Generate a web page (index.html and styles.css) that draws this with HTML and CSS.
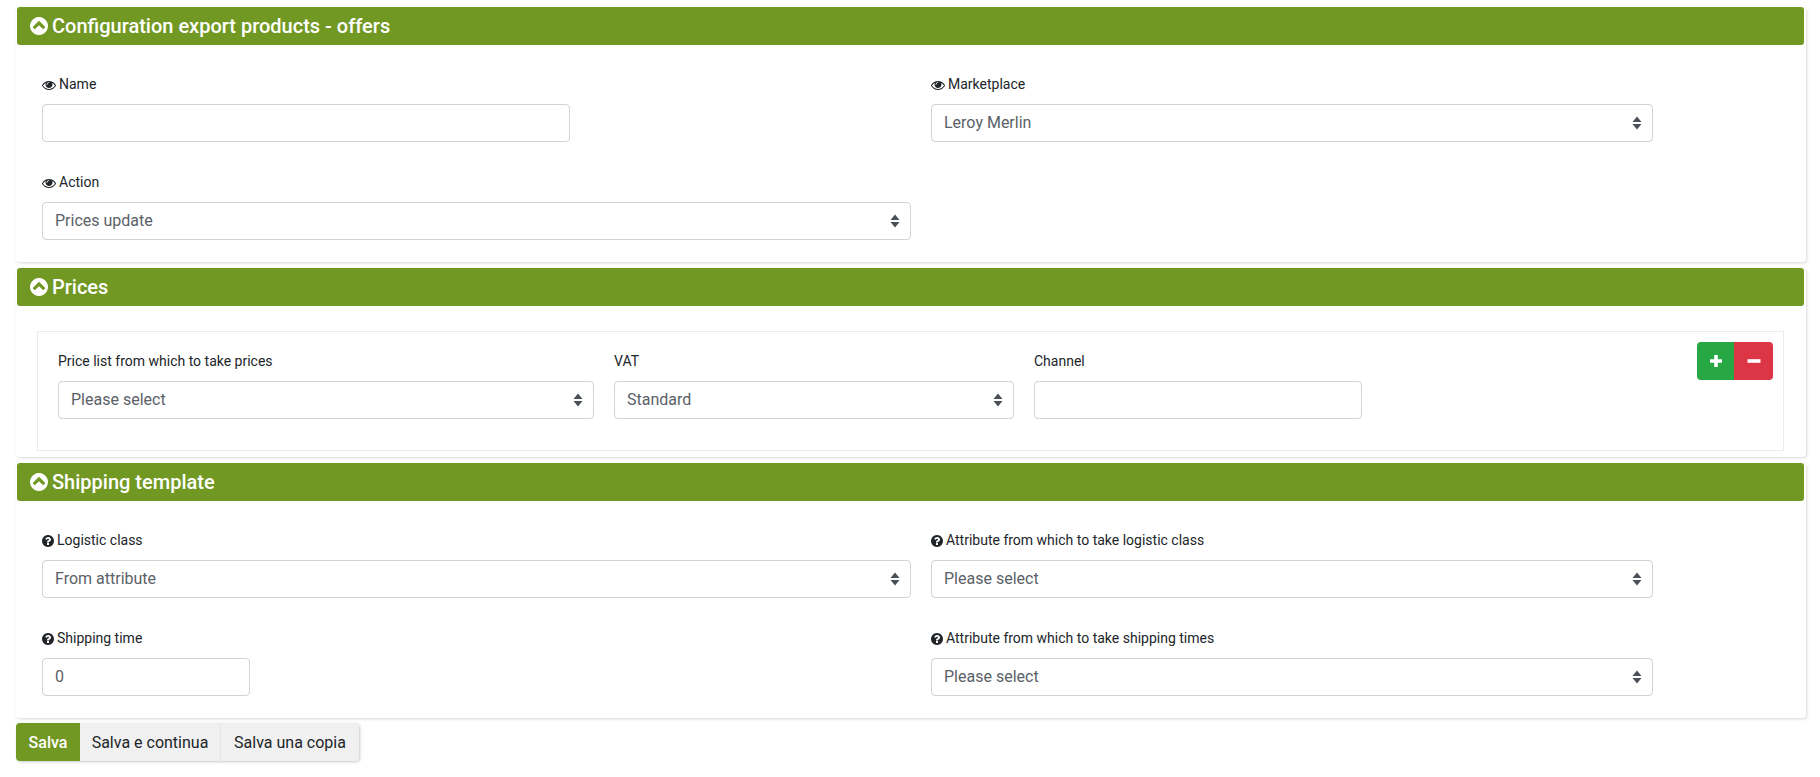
FILE: index.html
```html
<!DOCTYPE html>
<html lang="en">
<head>
<meta charset="utf-8">
<title>Configuration export products - offers</title>
<link rel="stylesheet" href="styles.css">
</head>
<body>
<svg class="defs" width="0" height="0" aria-hidden="true">
  <symbol id="i-up" viewBox="128 128 1536 1536"><path d="M1293 1139l102-102q19-19 19-45t-19-45l-454-454q-19-19-45-19t-45 19l-454 454q-19 19-19 45t19 45l102 102q19 19 45 19t45-19l307-307 307 307q19 19 45 19t45-19zm371-243q0 209-103 385.500t-279.500 279.500-385.500 103-385.500-103-279.500-279.500-103-385.500 103-385.500 279.500-279.500 385.500-103 385.500 103 279.500 279.500 103 385.500z"/></symbol>
  <symbol id="i-eye" viewBox="0 256 1792 1280"><path d="M1664 960q-152-236-381-353 61 104 61 225 0 185-131.500 316.500t-316.500 131.500-316.500-131.500-131.500-316.500q0-121 61-225-229 117-381 353 133 205 333.500 326.500t434.500 121.500 434.500-121.500 333.500-326.500zm-720-384q0-20-14-34t-34-14q-125 0-214.500 89.500t-89.500 214.500q0 20 14 34t34 14 34-14 14-34q0-86 61-147t147-61q20 0 34-14t14-34zm848 384q0 34-20 69-140 230-376.500 368.500t-499.500 138.500-499.500-139-376.500-368q-20-35-20-69t20-69q140-229 376.500-368t499.500-139 499.500 139 376.500 368q20 35 20 69z"/></symbol>
  <symbol id="i-q" viewBox="128 128 1536 1536"><path d="M1024 1376v-192q0-14-9-23t-23-9h-192q-14 0-23 9t-9 23v192q0 14 9 23t23 9h192q14 0 23-9t9-23zm256-672q0-88-55.500-163t-138.500-116-170-41q-243 0-371 213-15 24 8 42l132 100q7 6 19 6 16 0 25-12 53-68 86-92 34-24 86-24 48 0 85.500 26t37.500 59q0 38-20 61t-68 45q-63 28-115.500 86.500t-52.500 125.500v36q0 14 9 23t23 9h192q14 0 23-9t9-23q0-19 21.500-49.500t54.500-49.500q32-18 49-28.500t46-35 44.500-48 28-60.500 12.500-81zm384 192q0 209-103 385.500t-279.500 279.500-385.500 103-385.500-103-279.500-279.500-103-385.500 103-385.500 279.500-279.500 385.500-103 385.500 103 279.500 279.500 103 385.500z"/></symbol>
</svg>

<main class="page">
  <section class="card">
    <h2 class="card-head"><svg class="head-icon"><use href="#i-up"/></svg>Configuration export products - offers</h2>
    <div class="card-body grid">
      <div class="field">
        <label class="lbl"><svg class="eye"><use href="#i-eye"/></svg>Name</label>
        <input class="ctl w-name" type="text">
      </div>
      <div class="field">
        <label class="lbl"><svg class="eye"><use href="#i-eye"/></svg>Marketplace</label>
        <select class="ctl sel"><option>Leroy Merlin</option></select>
      </div>
      <div class="field">
        <label class="lbl"><svg class="eye"><use href="#i-eye"/></svg>Action</label>
        <select class="ctl sel"><option>Prices update</option></select>
      </div>
    </div>
  </section>

  <section class="card">
    <h2 class="card-head"><svg class="head-icon"><use href="#i-up"/></svg>Prices</h2>
    <div class="card-body prices-body">
      <div class="panel">
        <div class="field f-price">
          <label class="lbl">Price list from which to take prices</label>
          <select class="ctl sel"><option>Please select</option></select>
        </div>
        <div class="field f-vat">
          <label class="lbl">VAT</label>
          <select class="ctl sel"><option>Standard</option></select>
        </div>
        <div class="field f-channel">
          <label class="lbl">Channel</label>
          <input class="ctl" type="text">
        </div>
        <div class="tools">
          <button class="tool add" type="button" aria-label="Add"><svg viewBox="0 0 14 14" width="14" height="14"><path d="M5.200 1h3.600v4.200H13v3.600H8.800V13H5.200V8.800H1V5.200h4.200z"/></svg></button>
          <button class="tool del" type="button" aria-label="Remove"><svg viewBox="0 0 14 14" width="14" height="14"><path d="M0.500 5.200h13v3.600H0.500z"/></svg></button>
        </div>
      </div>
    </div>
  </section>

  <section class="card">
    <h2 class="card-head"><svg class="head-icon"><use href="#i-up"/></svg>Shipping template</h2>
    <div class="card-body grid">
      <div class="field">
        <label class="lbl"><svg class="qm"><use href="#i-q"/></svg>Logistic class</label>
        <select class="ctl sel"><option>From attribute</option></select>
      </div>
      <div class="field">
        <label class="lbl"><svg class="qm"><use href="#i-q"/></svg>Attribute from which to take logistic class</label>
        <select class="ctl sel"><option>Please select</option></select>
      </div>
      <div class="field">
        <label class="lbl"><svg class="qm"><use href="#i-q"/></svg>Shipping time</label>
        <input class="ctl w-time" type="text" value="0">
      </div>
      <div class="field">
        <label class="lbl"><svg class="qm"><use href="#i-q"/></svg>Attribute from which to take shipping times</label>
        <select class="ctl sel"><option>Please select</option></select>
      </div>
    </div>
  </section>

  <div class="actions">
    <button class="act primary" type="button">Salva</button>
    <button class="act w-cont" type="button">Salva e continua</button>
    <button class="act w-copy" type="button">Salva una copia</button>
  </div>
</main>
</body>
</html>
```
FILE: styles.css
```css
* { box-sizing: border-box; }
html, body { margin: 0; background: #fff; }
body { font-family: Roboto, "Liberation Sans", sans-serif; color: #212529; height: 777px; overflow: hidden; }
.defs { position: absolute; }

.page { padding: 7px 14px 0 16px; }

.card {
  background: #fff;
  border-radius: 4px;
  box-shadow: 1px 1px 3px rgba(0, 0, 0, .16);
  margin-bottom: 6px;
  padding: 0 2px 0 1px;
}
.card-head {
  margin: 0;
  height: 38px;
  display: flex;
  align-items: center;
  padding-left: 13px;
  background: #729824;
  color: #fff;
  font-size: 20px;
  font-weight: 500;
  border-radius: 3px;
}
.head-icon { width: 18px; height: 18px; margin-right: 4px; fill: #fff; flex: none; }

.card-body { padding: 29px 23px 0 25px; }
.grid {
  display: grid;
  grid-template-columns: 869px 722px;
  column-gap: 20px;
  row-gap: 30px;
  padding-bottom: 22px;
}
.prices-body { padding: 25px 20px 6px 20px; }

.field { display: flex; flex-direction: column; align-items: flex-start; }
.lbl {
  display: flex;
  align-items: center;
  height: 21px;
  margin-bottom: 9px;
  font-size: 14px;
  font-weight: 400;
  line-height: 21px;
}
.eye { width: 14px; height: 10px; margin-right: 3px; fill: #212529; }
.qm { width: 12px; height: 12px; margin-right: 3px; fill: #212529; }

.ctl {
  width: 100%;
  height: 38px;
  padding: 5px 12px 7px;
  font-family: inherit;
  font-size: 16px;
  color: #5a6168;
  background-color: #fff;
  border: 1px solid #ced4da;
  border-radius: 4px;
  outline: none;
}
.sel {
  appearance: none;
  -webkit-appearance: none;
  background-image: url("data:image/svg+xml,%3Csvg xmlns='http://www.w3.org/2000/svg' width='10' height='14' viewBox='0 0 10 14'%3E%3Cpath fill='%23495057' d='M5 .5l4.500 5.500H.5zM5 13.500L.5 8h9z'/%3E%3C/svg%3E");
  background-repeat: no-repeat;
  background-position: right 10px center;
}
.w-name { width: 528px; }
.w-time { width: 208px; }

.panel {
  display: flex;
  gap: 20px;
  height: 120px;
  padding: 19px 10px 0 20px;
  border: 1px solid #e9ecef;
}
.f-price { width: 536px; }
.f-vat { width: 400px; }
.f-channel { width: 328px; }
.tools { display: flex; margin-left: auto; align-self: flex-start; margin-top: -9px; }
.tool {
  height: 38px;
  padding: 0;
  border: 0;
  display: flex;
  align-items: center;
  justify-content: center;
  color: #fff;
}
.tool svg { fill: #fff; }
.add { width: 37px; background: #28a745; border-radius: 4px 0 0 4px; }
.del { width: 39px; background: #dc3545; border-radius: 0 4px 4px 0; }

.actions {
  display: inline-flex;
  margin-top: -1px;
  border-radius: 4px;
  box-shadow: 1px 1px 3px rgba(0, 0, 0, .22);
}
.act {
  height: 38px;
  padding: 0;
  border: 0;
  font-family: inherit;
  font-size: 16px;
  color: #212529;
  background: #f0f0f0;
  border-left: 1px solid #e4e4e4;
}
.primary { width: 64px; background: #729824; color: #fff; font-weight: 500; border: 0; border-radius: 4px 0 0 4px; }
.w-cont { width: 140px; border-left: 0; }
.w-copy { width: 139px; border-radius: 0 4px 4px 0; }
```
